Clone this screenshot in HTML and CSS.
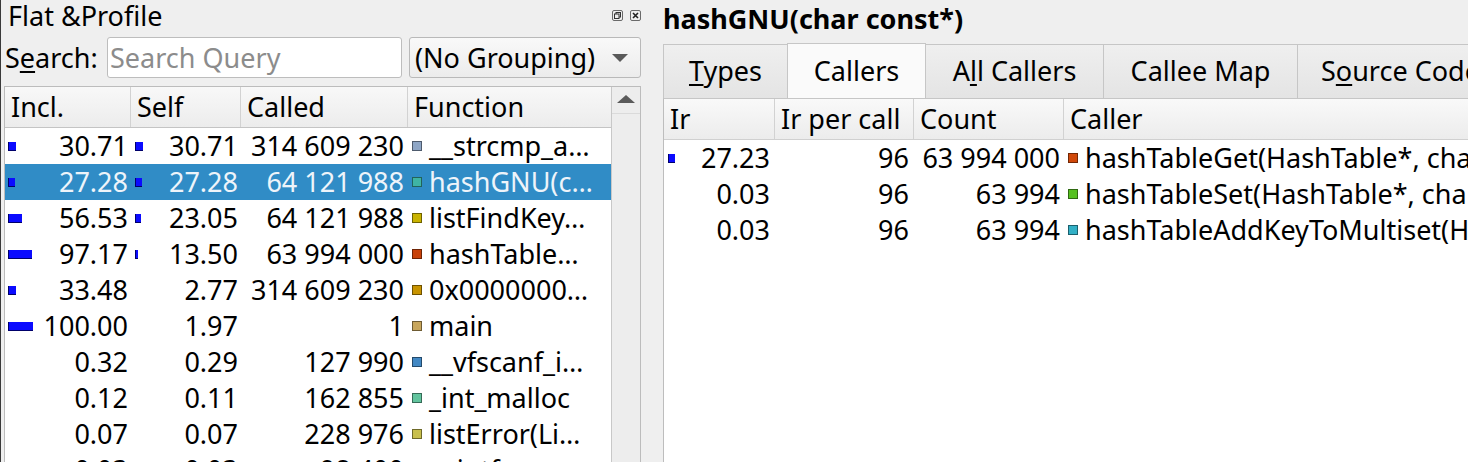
FILE: index.html
```html
<!DOCTYPE html>
<html>
<head>
<meta charset="utf-8">
<title>KCachegrind</title>
<link rel="stylesheet" href="styles.css">
</head>
<body>
<div class="app">
  <section class="left">
    <div class="dock-title">
      <span class="dock-label">Flat &amp;Profile</span>
      <span class="dock-btns">
        <svg width="11" height="11" viewBox="0 0 11 11"><rect x="0.5" y="0.5" width="10" height="10" rx="1.5" fill="none" stroke="#6a6a6a"/><rect x="4" y="2.5" width="4.5" height="4.5" fill="none" stroke="#333"/><rect x="2.5" y="4" width="4.5" height="4.5" fill="#eee" stroke="#333"/></svg>
        <svg width="11" height="11" viewBox="0 0 11 11"><rect x="0.5" y="0.5" width="10" height="10" rx="1.5" fill="none" stroke="#6a6a6a"/><path d="M3 3 L8 8 M8 3 L3 8" stroke="#222" stroke-width="1.6"/></svg>
      </span>
    </div>
    <div class="search-row">
      <span class="search-label">S<u>e</u>arch:</span>
      <div class="search-input">Search Query</div>
      <div class="combo"><span>(No Grouping)</span><span class="combo-arrow"></span></div>
    </div>
    <div class="tree">
      <div class="tree-main">
        <div class="trow thead">
          <div class="hcell">Incl.</div>
          <div class="hcell">Self</div>
          <div class="hcell">Called</div>
          <div class="hcell">Function</div>
        </div>
        <div class="trow">
          <div class="cell num"><span class="bar" style="width:8px"></span><span>30.71</span></div>
          <div class="cell num"><span class="bar" style="width:8px"></span><span>30.71</span></div>
          <div class="cell num called"><span>314 609 230</span></div>
          <div class="cell fn"><span class="sw sw-strcmp"></span><span>__strcmp_a…</span></div>
        </div>
        <div class="trow sel">
          <div class="cell num"><span class="bar" style="width:7px"></span><span>27.28</span></div>
          <div class="cell num"><span class="bar" style="width:7px"></span><span>27.28</span></div>
          <div class="cell num called"><span>64 121 988</span></div>
          <div class="cell fn"><span class="sw sw-hashgnu"></span><span>hashGNU(c…</span></div>
        </div>
        <div class="trow">
          <div class="cell num"><span class="bar" style="width:14px"></span><span>56.53</span></div>
          <div class="cell num"><span class="bar" style="width:6px"></span><span>23.05</span></div>
          <div class="cell num called"><span>64 121 988</span></div>
          <div class="cell fn"><span class="sw sw-listfind"></span><span>listFindKey…</span></div>
        </div>
        <div class="trow">
          <div class="cell num"><span class="bar" style="width:24px"></span><span>97.17</span></div>
          <div class="cell num"><span class="bar" style="width:3px"></span><span>13.50</span></div>
          <div class="cell num called"><span>63 994 000</span></div>
          <div class="cell fn"><span class="sw sw-hashtable"></span><span>hashTable…</span></div>
        </div>
        <div class="trow">
          <div class="cell num"><span class="bar" style="width:8px"></span><span>33.48</span></div>
          <div class="cell num"><span></span><span>2.77</span></div>
          <div class="cell num called"><span>314 609 230</span></div>
          <div class="cell fn"><span class="sw sw-hex"></span><span>0x0000000…</span></div>
        </div>
        <div class="trow">
          <div class="cell num"><span class="bar" style="width:25px"></span><span>100.00</span></div>
          <div class="cell num"><span></span><span>1.97</span></div>
          <div class="cell num called"><span>1</span></div>
          <div class="cell fn"><span class="sw sw-main"></span><span>main</span></div>
        </div>
        <div class="trow">
          <div class="cell num"><span></span><span>0.32</span></div>
          <div class="cell num"><span></span><span>0.29</span></div>
          <div class="cell num called"><span>127 990</span></div>
          <div class="cell fn"><span class="sw sw-vfscanf"></span><span>__vfscanf_i…</span></div>
        </div>
        <div class="trow">
          <div class="cell num"><span></span><span>0.12</span></div>
          <div class="cell num"><span></span><span>0.11</span></div>
          <div class="cell num called"><span>162 855</span></div>
          <div class="cell fn"><span class="sw sw-malloc"></span><span>_int_malloc</span></div>
        </div>
        <div class="trow">
          <div class="cell num"><span></span><span>0.07</span></div>
          <div class="cell num"><span></span><span>0.07</span></div>
          <div class="cell num called"><span>228 976</span></div>
          <div class="cell fn"><span class="sw sw-listerror"></span><span>listError(Li…</span></div>
        </div>
        <div class="trow">
          <div class="cell num"><span></span><span>0.03</span></div>
          <div class="cell num"><span></span><span>0.03</span></div>
          <div class="cell num called"><span>98 400</span></div>
          <div class="cell fn"><span class="sw sw-printf"></span><span>printf</span></div>
        </div>
      </div>
      <div class="vscroll">
        <div class="vscroll-up"><span class="up-arrow"></span></div>
        <div class="vscroll-track"></div>
      </div>
    </div>
  </section>
  <div class="splitter"></div>
  <section class="right">
    <div class="fn-title">hashGNU(char const*)</div>
    <div class="tabs">
      <div class="tab tab-types"><u>T</u>ypes</div>
      <div class="tab tab-callers active">Callers</div>
      <div class="tab tab-allcallers">A<u>l</u>l Callers</div>
      <div class="tab tab-calleemap">Callee Map</div>
      <div class="tab tab-source">S<u>o</u>urce Code</div>
    </div>
    <div class="list">
      <div class="lrow lhead">
        <div class="hcell">Ir</div>
        <div class="hcell">Ir per call</div>
        <div class="hcell">Count</div>
        <div class="hcell">Caller</div>
      </div>
      <div class="lrow">
        <div class="cell num"><span class="bar" style="width:7px"></span><span>27.23</span></div>
        <div class="cell num end"><span>96</span></div>
        <div class="cell num end"><span>63 994 000</span></div>
        <div class="cell fn"><span class="sw sw-get"></span><span>hashTableGet(HashTable*, char const*)</span></div>
      </div>
      <div class="lrow">
        <div class="cell num"><span></span><span>0.03</span></div>
        <div class="cell num end"><span>96</span></div>
        <div class="cell num end"><span>63 994</span></div>
        <div class="cell fn"><span class="sw sw-set"></span><span>hashTableSet(HashTable*, char const*)</span></div>
      </div>
      <div class="lrow">
        <div class="cell num"><span></span><span>0.03</span></div>
        <div class="cell num end"><span>96</span></div>
        <div class="cell num end"><span>63 994</span></div>
        <div class="cell fn"><span class="sw sw-add"></span><span>hashTableAddKeyToMultiset(HashTable*, char const*)</span></div>
      </div>
    </div>
  </section>
</div>
</body>
</html>
```

FILE: styles.css
```css
* { box-sizing: border-box; }
html, body { margin: 0; padding: 0; height: 100%; }
body {
  background: #efefef;
  font-family: "Noto Sans", "DejaVu Sans", sans-serif;
  font-size: 27px;
  color: #000;
  overflow: hidden;
}
u { text-decoration-thickness: 2px; text-underline-offset: 3px; }

.app {
  display: flex;
  height: 462px;
  border-left: 1px solid #3a3a3a;
  overflow: hidden;
}

/* ---------- left dock ---------- */
.left {
  width: 649px;
  flex: none;
  padding: 0 9px 0 3px;
  display: flex;
  flex-direction: column;
}
.dock-title {
  height: 37px;
  display: flex;
  justify-content: space-between;
  align-items: flex-start;
  line-height: 32px;
  padding-left: 4px;
}
.dock-btns {
  display: flex;
  gap: 7px;
  padding-top: 10px;
  line-height: 0;
}
.search-row {
  height: 41px;
  display: flex;
  align-items: stretch;
  margin-bottom: 8px;
}
.search-label {
  width: 103px;
  flex: none;
  padding-left: 1px;
  line-height: 41px;
}
.search-input {
  width: 295px;
  flex: none;
  background: #fff;
  border: 1px solid #bdbdbd;
  border-radius: 3px;
  color: #8c8c8c;
  padding-left: 2px;
  line-height: 39px;
}
.combo {
  flex: 1;
  margin-left: 7px;
  border: 1px solid #b9b9b9;
  border-radius: 3px;
  background: linear-gradient(#f9f9f9, #ececec);
  display: flex;
  justify-content: space-between;
  align-items: center;
  padding: 0 12px 0 5px;
  line-height: 39px;
}
.combo-arrow {
  width: 0; height: 0;
  border-left: 8px solid transparent;
  border-right: 8px solid transparent;
  border-top: 8px solid #5a5a5a;
}

.tree {
  flex: 1;
  min-height: 0;
  display: flex;
  background: #fff;
  border: 1px solid #bcbcbc;
  border-bottom: none;
  overflow: hidden;
}
.tree-main { width: 606px; flex: none; }
.trow {
  display: grid;
  grid-template-columns: 126px 110px 167px 203px;
  height: 36px;
  line-height: 36px;
  white-space: nowrap;
}
.thead {
  height: 41px;
  line-height: 40px;
  background: linear-gradient(#f8f8f8, #ececec);
  border-bottom: 1px solid #c4c4c4;
}
.hcell {
  padding-left: 6px;
  border-right: 1px solid #d2d2d2;
  overflow: hidden;
}
.hcell:last-child { border-right: none; }
.cell { overflow: hidden; }
.cell.num {
  display: flex;
  justify-content: space-between;
  align-items: center;
  padding: 0 3px 0 3px;
}
.trow .cell.num:nth-child(2) { padding-left: 4px; padding-right: 3px; }
.cell.num.called { justify-content: flex-end; padding-right: 4px; }
.cell.fn {
  display: flex;
  align-items: center;
  padding-left: 4px;
  gap: 7px;
}
.trow.sel { background: #308cc6; color: #eef4fa; }

.bar {
  display: block;
  height: 9px;
  background: #0b0bff;
  border-left: 1px solid #00006a;
  border-bottom: 1px solid #00006a;
  flex: none;
}
.sw {
  display: block;
  width: 10px;
  height: 10px;
  flex: none;
  border: 1px solid rgba(0,0,0,0.45);
}
.sw-strcmp { background: #8ea6c6; }
.sw-hashgnu { background: #3fb4a4; }
.sw-listfind { background: #c9b300; }
.sw-hashtable { background: #c8420a; }
.sw-hex { background: #c89400; }
.sw-main { background: #c8a65c; }
.sw-vfscanf { background: #4288c4; }
.sw-malloc { background: #62c49e; }
.sw-listerror { background: #c8bf4c; }
.sw-printf { background: #9a7ec8; }
.sw-get { background: #d0480a; }
.sw-set { background: #56c020; }
.sw-add { background: #32b0c6; }

.vscroll {
  flex: 1;
  display: flex;
  flex-direction: column;
  background: #ededed;
  border-left: 1px solid #c8c8c8;
}
.vscroll-up {
  height: 27px;
  display: flex;
  justify-content: center;
  padding-top: 8px;
  border-bottom: 1px solid #dadada;
}
.up-arrow {
  width: 0; height: 0;
  border-left: 9px solid transparent;
  border-right: 9px solid transparent;
  border-bottom: 8px solid #5a5a5a;
}
.vscroll-track { flex: 1; }

.splitter { width: 10px; flex: none; }

/* ---------- right panel ---------- */
.right {
  flex: 1;
  min-width: 0;
  overflow: hidden;
  display: flex;
  flex-direction: column;
  padding-left: 3px;
}
.fn-title {
  height: 43px;
  font-weight: bold;
  line-height: 32px;
  padding-top: 3px;
  white-space: nowrap;
}
.tabs {
  display: flex;
  height: 55px;
  align-items: flex-end;
  white-space: nowrap;
}
.tab {
  flex: none;
  height: 54px;
  line-height: 52px;
  text-align: center;
  background: linear-gradient(#efefef, #e4e4e4);
  border: 1px solid #c6c6c6;
  border-bottom: none;
  border-left: none;
}
.tab:first-child { border-left: 1px solid #c6c6c6; }
.tab.active {
  height: 55px;
  line-height: 54px;
  background: #fafafa;
  border-left: 1px solid #c6c6c6;
  margin-left: -1px;
}
.tab-types { width: 125px; }
.tab-callers { width: 139px; }
.tab-allcallers { width: 178px; }
.tab-calleemap { width: 194px; }
.tab-source { width: 200px; text-align: left; padding-left: 23px; }

.list {
  flex: 1;
  background: #fff;
  border-left: 1px solid #bdbdbd;
  border-top: 1px solid #c6c6c6;
}
.lrow {
  display: grid;
  grid-template-columns: 111px 139px 150px 1fr;
  height: 36px;
  line-height: 36px;
  white-space: nowrap;
}
.lhead {
  height: 41px;
  line-height: 40px;
  background: linear-gradient(#f9f9f9, #ececec);
  border-bottom: 1px solid #d0d0d0;
}
.lrow .cell.num { padding: 0 5px 0 4px; }
.lrow .cell.num.end { justify-content: flex-end; }
.lrow .cell.num.end:nth-child(3) { padding-right: 4px; }
.lrow .cell.fn { padding-left: 4px; gap: 7px; overflow: visible; }
```
